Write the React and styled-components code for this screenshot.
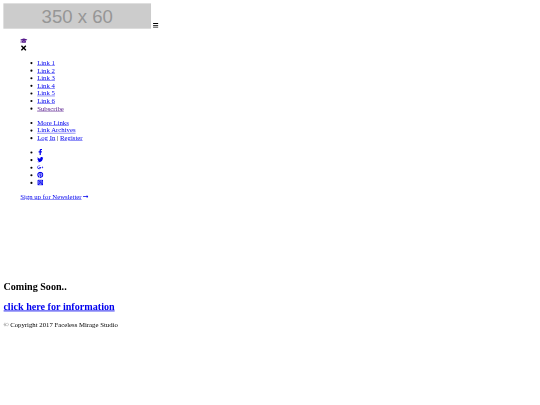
import React from "react";
import styled, { createGlobalStyle } from "styled-components";
import {
  FaBars, FaTimes, FaGraduationCap, FaFacebookF, FaTwitter, FaGooglePlusG,
  FaPinterest, FaInstagramSquare, FaLongArrowAltRight,
} from "react-icons/fa";

const Global = createGlobalStyle`
  html, body { margin: 0; background: #fff; }
  a { color: #0000ee; text-decoration: underline; }
`;

const Frame = styled.div`
  width: 540px;
  height: 405px;
  overflow: hidden;
`;
const Page = styled.div`
  box-sizing: border-box;
  width: 1280px;
  height: 960px;
  padding: 8px;
  transform: scale(0.421875);
  transform-origin: 0 0;
  filter: blur(0.5px);
  font-family: "Liberation Serif", "Times New Roman", serif;
  font-size: 16px;
  line-height: 18px;
  color: #000;
`;
const Header = styled.header`
  display: flex;
  align-items: flex-end;
  gap: 4px;
`;
const Placeholder = styled.div`
  width: 350px;
  height: 60px;
  background: #ccc;
  color: #969696;
  font: 44px/64px "Liberation Sans", Arial, sans-serif;
  text-align: center;
`;
const Burger = styled(FaBars)`
  display: block;
  width: 14px;
  height: 14px;
  margin-bottom: 1px;
`;
const Nav = styled.nav`
  padding: 20px 0 0 40px;
`;
const CapLink = styled.a`
  display: block;
  height: 16px;
  color: #551a8b;
  font-size: 17px;
`;
const Close = styled(FaTimes)`
  display: block;
  width: 16px;
  height: 18px;
  margin-top: 1px;
`;
const List = styled.ul`
  margin: 17px 0 16px;
  padding-left: 40px;
  & + & { margin-top: 16px; }
`;
const Item = styled.li`
  height: 18px;
`;
const Visited = styled.a`
  color: #551a8b;
`;
const Social = styled.a`
  font-size: 15px;
  svg { display: inline-block; vertical-align: -2px; }
`;
const Signup = styled.a`
  svg { vertical-align: -1px; margin-left: 3px; font-size: 14px; }
`;
const Main = styled.main`
  padding-top: 170px;
`;
const Title = styled.h2`
  margin: 20px 0;
  font-size: 24px;
  line-height: 27px;
`;
const Copy = styled.p`
  margin: 0;
`;

export default function App() {
  return (
    <Frame>
      <Global />
      <Page>
        <Header>
          <Placeholder>350 x 60</Placeholder>
          <Burger />
        </Header>
        <Nav>
          <CapLink href="#"><FaGraduationCap /></CapLink>
          <Close />
          <List>
            {[1, 2, 3, 4, 5, 6].map((n) => <Item key={n}><a href="#">Link {n}</a></Item>)}
            <Item><Visited href="#">Subscribe</Visited></Item>
          </List>
          <List>
            <Item><a href="#">More Links</a></Item>
            <Item><a href="#">Link Archives</a></Item>
            <Item><a href="#">Log In</a> | <a href="#">Register</a></Item>
          </List>
          <List>
            <Item><Social href="#"><FaFacebookF /></Social></Item>
            <Item><Social href="#"><FaTwitter /></Social></Item>
            <Item><Social href="#"><FaGooglePlusG /></Social></Item>
            <Item><Social href="#"><FaPinterest /></Social></Item>
            <Item><Social href="#"><FaInstagramSquare /></Social></Item>
          </List>
          <Signup href="#">Sign up for Newsletter<FaLongArrowAltRight /></Signup>
        </Nav>
        <Main>
          <Title>Coming Soon..</Title>
          <Title><a href="#">click here for information</a></Title>
          <Copy>© Copyright 2017 Faceless Mirage Studio</Copy>
        </Main>
      </Page>
    </Frame>
  );
}
